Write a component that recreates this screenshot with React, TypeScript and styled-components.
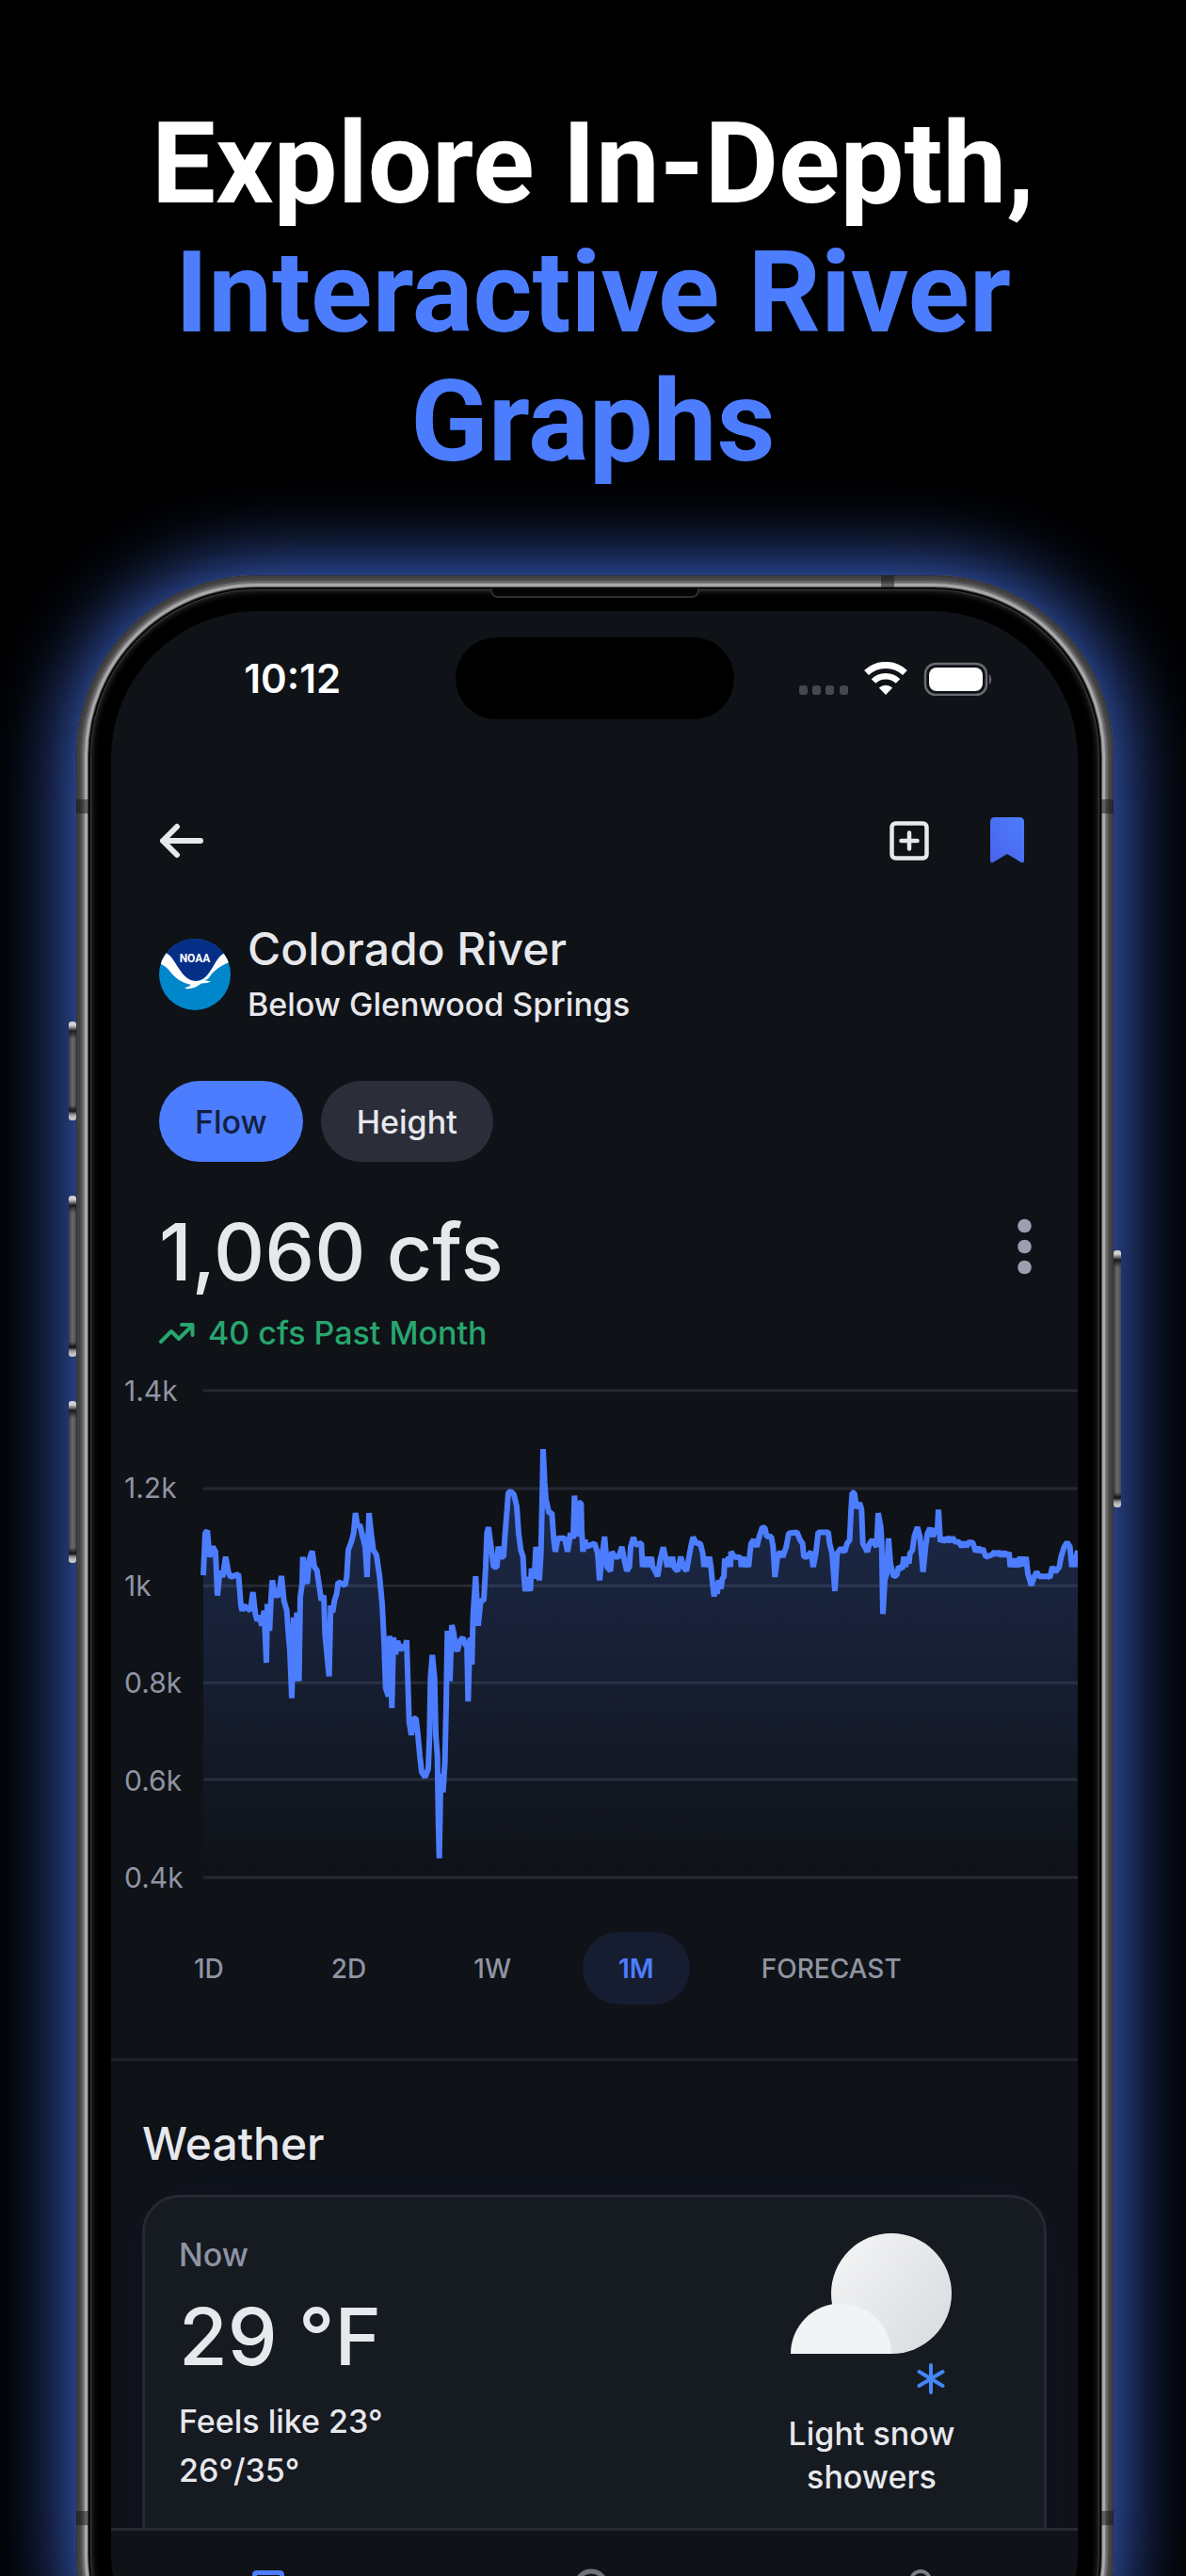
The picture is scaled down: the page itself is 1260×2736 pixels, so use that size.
import React from "react";
import styled, { createGlobalStyle, css } from "styled-components";

const GlobalStyle = createGlobalStyle`
  *, *::before, *::after { box-sizing: border-box; }
  body { margin: 0; background: #000; }
  button { font: inherit; border: 0; padding: 0; background: none; cursor: pointer; }
  svg { display: block; }
`;

const color = {
  screen: "#0f1217",
  card: "#161a21",
  line: "#262932",
  text: "#e7e8ec",
  muted: "#8f94a3",
  blue: "#4c7dff",
  green: "#27a66f",
};

const Page = styled.main`
  height: 100vh;
  overflow: hidden;
  background: #000;
  color: ${color.text};
  font-family: Inter, "Liberation Sans", sans-serif;
  font-weight: 500;
`;

const Headline = styled.h1`
  margin: 0;
  padding: 106px 60px 94px;
  font: 700 121px/137px Roboto, "Liberation Sans", sans-serif;
  color: #fff;
  text-align: center;
`;

const Accent = styled.span`
  display: block;
  color: ${color.blue};
`;

const Phone = styled.div`
  position: relative;
  margin: 0 77px 0 81px;
  aspect-ratio: 1102 / 2294;
  padding: 38px 38px 38px 37px;
  border-radius: 192px;
  background: #000;
  box-shadow:
    0 0 92px ${color.blue},
    inset 0 0 0 1px #333335,
    inset 0 0 0 4px #424244,
    inset 0 0 0 6px #4e4e50,
    inset 0 0 0 8px #6a6a6b,
    inset 0 0 0 9px #858586,
    inset 0 0 0 12px #a8a8a8,
    inset 0 0 0 13px #4c4c4c,
    inset 0 0 0 15px #070707,
    inset 0 0 0 16px #3a3a3a,
    inset 0 0 6px 17px #303030;
`;

const SideKey = styled.span<{ $side: "left" | "right"; $top: number; $length: number }>`
  position: absolute;
  ${(p) => p.$side}: -8px;
  top: ${(p) => p.$top}px;
  width: 8px;
  height: ${(p) => p.$length}px;
  border-radius: 3px;
  background:
    linear-gradient(#d0d0d0 0 4px, #777 7px, #1a1a1a 10px, transparent 18px calc(100% - 16px), #111 calc(100% - 10px), #999 calc(100% - 6px), #c4c4c4 calc(100% - 3px)),
    linear-gradient(90deg, #3c3c3e, #6b6b6d, #4a4a4c);
`;

const Band = styled.span<{ $edge: "left" | "right" | "top"; $at: number }>`
  position: absolute;
  background: rgba(20, 20, 20, 0.5);
  ${(p) =>
    p.$edge === "top"
      ? css`top: 0; left: ${p.$at}px; width: 14px; height: 13px;`
      : css`${p.$edge}: 0; top: ${p.$at}px; width: 13px; height: 15px;`}
`;

const Earpiece = styled.span`
  position: absolute;
  top: 14px;
  left: 50%;
  width: 222px;
  height: 10px;
  margin-left: -111px;
  border: 2px solid #2e2e2e;
  border-top: 0;
  border-radius: 0 0 8px 8px;
  background: #050505;
`;

const Screen = styled.div`
  display: flex;
  flex-direction: column;
  height: 100%;
  overflow: hidden;
  border-radius: 156px;
  background: ${color.screen};
`;

const Content = styled.div`
  flex: 1;
  min-height: 0;
  overflow: hidden;
`;

const StatusBar = styled.div`
  display: grid;
  grid-template-columns: 1fr 296px 1fr;
  align-items: center;
  padding-top: 28px;
`;

const Clock = styled.time`
  padding-left: 20px;
  color: #fff;
  font-size: 42px;
  font-weight: 600;
  line-height: 46px;
  text-align: center;
`;

const Island = styled.div`
  height: 87px;
  border-radius: 44px;
  background: #000;
`;

const StatusIcons = styled.div`
  display: flex;
  justify-content: center;
  padding-right: 20px;
`;

const NavBar = styled.nav`
  display: flex;
  align-items: center;
  gap: 65px;
  padding: 104px 57px 0 51px;
`;

const IconButton = styled.button<{ $push?: boolean }>`
  display: flex;
  align-items: center;
  height: 49px;
  margin-left: ${(p) => (p.$push ? "auto" : "0")};
`;

const Station = styled.header`
  display: flex;
  align-items: center;
  gap: 18px;
  padding: 63px 51px 0;
`;

const Title = styled.h2`
  margin: 0;
  font-size: 48px;
  font-weight: 500;
  line-height: 56px;
`;

const Body = styled.p<{ $muted?: boolean; $leading?: number }>`
  margin: 0;
  font-size: 34px;
  line-height: ${(p) => p.$leading ?? 46}px;
  color: ${(p) => (p.$muted ? color.muted : color.text)};
`;

const StationText = styled.div`
  display: grid;
  gap: 8px;
`;

const Pills = styled.div`
  display: flex;
  gap: 19px;
  padding: 58px 51px 0;
`;

const Pill = styled.button<{ $active?: boolean }>`
  height: 86px;
  padding: 0 38px;
  border-radius: 43px;
  font-size: 34px;
  background: ${(p) => (p.$active ? color.blue : "#2b2e39")};
  color: ${(p) => (p.$active ? "#13203f" : color.text)};
`;

const Reading = styled.div`
  display: flex;
  justify-content: space-between;
  padding: 46px 49px 0 51px;
`;

const Figure = styled.p`
  margin: 0;
  font-size: 84px;
  line-height: 100px;
`;

const MoreButton = styled.button`
  align-self: flex-start;
  padding: 14px 0;
`;

const Trend = styled.p`
  display: flex;
  align-items: center;
  gap: 14px;
  margin: 0;
  padding: 13px 51px 0;
  font-size: 34px;
  line-height: 46px;
  color: ${color.green};
`;

const Chart = styled.figure`
  display: grid;
  grid-template-columns: 98px 1fr;
  margin: 15px 0 0;
`;

const AxisLabels = styled.div`
  display: flex;
  flex-direction: column;
  justify-content: space-between;
  padding-left: 14px;
  font-size: 30px;
  font-weight: 400;
  line-height: 46px;
  color: ${color.muted};
`;

const Plot = styled.svg`
  width: 100%;
  height: 517px;
  margin: 23px 0;
  overflow: visible;
`;

const Ranges = styled.div`
  display: flex;
  gap: 38px;
  padding: 35px 50px 57px;
  border-bottom: 3px solid #1e2129;
`;

const Range = styled.button<{ $active?: boolean }>`
  height: 77px;
  padding: 0 38px;
  border-radius: 38px;
  font-size: 28px;
  font-weight: ${(p) => (p.$active ? 600 : 500)};
  background: ${(p) => (p.$active ? "#161d30" : "transparent")};
  color: ${(p) => (p.$active ? color.blue : color.muted)};
`;

const Weather = styled.section`
  padding: 60px 33px 0;
`;

const Card = styled.div`
  display: flex;
  justify-content: space-between;
  height: 480px;
  margin-top: 26px;
  padding: 38px 38px 38px 36px;
  border: 3px solid ${color.line};
  border-radius: 40px;
  background: ${color.card};
  box-shadow: 0 0 60px rgba(20, 30, 70, 0.3);
`;

const Now = styled.div`
  display: grid;
  align-content: start;
  row-gap: 14px;
`;

const Sky = styled.div`
  display: flex;
  flex-direction: column;
  align-items: center;
  gap: 18px;
  width: 290px;
  text-align: center;
`;

const SkyText = styled(Body)`
  max-width: 220px;
`;

const TabBar = styled.nav`
  display: flex;
  justify-content: space-between;
  height: 182px;
  padding: 40px 144px 0;
  border-top: 3px solid ${color.line};
  background: ${color.screen};
`;

const Tab = styled.a`
  height: 46px;
`;

/* Flow over the past month, as x,y pairs in plot units. */
const FLOW: number[] = [
  78,625, 84,500, 91,492, 98,570, 108,540, 117,555, 123,685, 131,612, 140,630, 149,570, 158,615, 165,630, 190,622,
  198,715, 202,730, 208,715, 228,730, 236,675, 244,740, 250,760, 258,745, 264,775, 272,730, 279,885, 282,710,
  289,790, 294,690, 298,640, 306,685, 318,685, 327,627, 335,700, 344,730, 350,810, 354,850, 360,990, 366,750,
  371,940, 376,735, 383,940, 387,690, 393,650, 395,570, 402,630, 409,650, 415,580, 425,553, 432,600, 440,610,
  448,660, 454,700, 462,685, 466,800, 472,860, 479,925, 484,715, 490,735, 496,700, 503,680, 508,645, 530,655,
  535,630, 540,550, 550,525, 557,500, 563,440, 570,480, 577,475, 586,510, 594,540, 600,630, 606,440, 613,500,
  620,550, 630,565, 640,630, 648,710, 654,820, 657,900, 659,960, 668,985, 672,805, 679,1020, 684,810, 691,860,
  697,820, 705,848, 716,832, 720,848, 726,818, 730,940, 734,1060, 741,1100, 748,1050, 756,1052, 762,1100,
  768,1160, 774,1210, 785,1225, 795,1200, 799,1100, 802,930, 808,862, 815,930, 819,1100, 824,1160, 827,1350,
  830,1466, 835,1215, 842,1270, 848,1180, 852,1010, 856,790, 864,940, 870,773, 876,795, 882,840, 888,850,
  896,820, 905,810, 914,835, 918,820, 922,1000, 928,810, 934,890, 938,740, 946,628, 954,775, 962,700, 972,700,
  978,600, 982,500, 987,482, 995,540, 1003,600, 1014,600, 1018,540, 1027,570, 1035,570, 1040,500, 1046,430,
  1050,380, 1057,375, 1068,385, 1077,420, 1083,500, 1090,550, 1097,570, 1100,630, 1104,672, 1111,630, 1120,672,
  1124,605, 1133,635, 1138,540, 1149,640, 1154,560, 1158,400, 1161,250, 1166,350, 1170,400, 1180,440, 1189,440,
  1195,520, 1200,555, 1208,515, 1230,515, 1239,555, 1248,500, 1257,515, 1261,388, 1268,510, 1275,410, 1282,410,
  1284,490, 1288,555, 1294,520, 1300,540, 1325,530, 1335,560, 1341,640, 1350,560, 1357,510, 1365,600, 1376,612,
  1380,555, 1390,570, 1402,570, 1412,540, 1420,580, 1428,612, 1436,600, 1440,540, 1449,512, 1456,535, 1470,530,
  1474,530, 1478,600, 1482,570, 1490,600, 1494,570, 1500,600, 1506,570, 1510,600, 1514,605, 1526,628, 1534,580,
  1544,542, 1552,575, 1557,600, 1562,570, 1568,600, 1573,570, 1578,600, 1582,605, 1590,612, 1600,570, 1608,600,
  1618,612, 1626,570, 1632,540, 1639,512, 1650,530, 1662,530, 1670,560, 1674,600, 1680,570, 1686,600, 1691,570,
  1696,600, 1700,640, 1706,688, 1712,650, 1716,680, 1720,640, 1728,665, 1732,635, 1737,630, 1740,575, 1746,600,
  1752,570, 1758,600, 1760,555, 1770,570, 1790,572, 1793,600, 1799,570, 1804,600, 1810,575, 1816,600, 1820,560,
  1824,530, 1832,520, 1842,540, 1850,510, 1860,482, 1868,485, 1874,510, 1888,510, 1894,540, 1900,630, 1908,570,
  1916,555, 1925,570, 1936,540, 1944,500, 1970,497, 1980,520, 1988,530, 1992,570, 2002,570, 2015,555, 2022,600,
  2030,560, 2038,497, 2070,497, 2074,530, 2082,560, 2091,672, 2098,560, 2110,545, 2122,555, 2130,530, 2138,520,
  2142,440, 2146,380, 2153,380, 2160,425, 2170,410, 2176,430, 2180,530, 2186,540, 2194,555, 2202,530, 2210,520,
  2224,540, 2229,440, 2237,480, 2240,520, 2244,740, 2250,640, 2256,620, 2262,515, 2268,590, 2278,628, 2288,625,
  2294,600, 2306,605, 2311,570, 2316,600, 2321,570, 2327,590, 2330,560, 2338,550, 2344,510, 2354,482, 2362,510,
  2372,615, 2380,540, 2386,500, 2394,485, 2404,510, 2410,485, 2417,500, 2421,430, 2427,525, 2435,515, 2445,525,
  2450,512, 2460,525, 2466,512, 2472,525, 2485,525, 2495,540, 2504,527, 2510,540, 2516,527, 2530,527, 2540,555,
  2548,542, 2556,555, 2562,545, 2572,570, 2590,565, 2600,555, 2606,565, 2614,555, 2622,567, 2632,557, 2640,567,
  2646,557, 2650,600, 2658,575, 2664,600, 2670,575, 2676,600, 2681,570, 2686,598, 2691,570, 2696,595, 2700,570,
  2706,620, 2717,655, 2726,630, 2734,615, 2742,628, 2770,628, 2776,632, 2784,600, 2794,615, 2806,600, 2812,570,
  2822,540, 2831,527, 2840,540, 2846,600, 2851,570, 2856,600, 2860,570, 2865,552,
];

const GRID = [76, 367, 656, 944, 1232, 1523];

function FlowChart() {
  const points: string[] = [];
  for (let i = 0; i < FLOW.length; i += 2) points.push(`${FLOW[i]},${FLOW[i + 1]}`);
  const line = points.join(" ");
  return (
    <Chart aria-label="Flow over the past month">
      <AxisLabels>
        {["1.4k", "1.2k", "1k", "0.8k", "0.6k", "0.4k"].map((label) => (
          <span key={label}>{label}</span>
        ))}
      </AxisLabels>
      <Plot viewBox="78 76 2787 1447" preserveAspectRatio="none" aria-hidden="true">
        <defs>
          <linearGradient id="flowFill" gradientUnits="userSpaceOnUse" x1="0" y1="250" x2="0" y2="1523">
            <stop offset="0" stopColor={color.blue} stopOpacity="0.24" />
            <stop offset="1" stopColor={color.blue} stopOpacity="0" />
          </linearGradient>
        </defs>
        {GRID.map((y) => (
          <line key={y} x1="78" x2="2865" y1={y} y2={y} stroke={color.line} strokeWidth="3" vectorEffect="non-scaling-stroke" />
        ))}
        <polygon points={`78,1523 ${line} 2865,1523`} fill="url(#flowFill)" />
        <polyline points={line} fill="none" stroke={color.blue} strokeWidth="6" strokeLinejoin="bevel" vectorEffect="non-scaling-stroke" />
      </Plot>
    </Chart>
  );
}

function StatusGlyphs() {
  return (
    <svg width="206" height="36" viewBox="0 0 206 36" role="img" aria-label="No signal, Wi-Fi, battery full">
      {[0, 14, 28, 43].map((x) => (
        <rect key={x} x={x} y="25" width="9" height="10" rx="3" fill="#45484d" />
      ))}
      <g fill="none" stroke="#fff">
        <path d="M71.500 11.500A30 30 0 0 1 112.500 11.500" strokeWidth="7" />
        <path d="M79 20.500A18.500 18.500 0 0 1 105 20.500" strokeWidth="6.500" />
      </g>
      <path d="M92 35L84.800 27.600A10.500 10.500 0 0 1 99.200 27.600Z" fill="#fff" />
      <rect x="134" y="2" width="65" height="33" rx="11" fill="none" stroke="#696b6f" strokeWidth="2.500" />
      <rect x="138" y="6" width="57" height="25" rx="8" fill="#fff" />
      <path d="M202 13a6 7 0 0 1 0 11z" fill="#696b6f" />
    </svg>
  );
}

function NoaaLogo() {
  return (
    <svg width="76" height="76" viewBox="0 0 76 76" role="img" aria-label="NOAA">
      <clipPath id="noaaDisc"><circle cx="38" cy="38" r="38" /></clipPath>
      <g clipPath="url(#noaaDisc)">
        <rect width="76" height="76" fill="#0086cb" />
        <path d="M0 0H76V16C70 14 66 17 61 24C55 33 49 45 38 45C27 45 21 33 15 24C11 17 6 14 0 16Z" fill="#052f87" />
        <path d="M7 15C14 18 16 25 22 33C27 41 33 45 39 45C47 45 51 40 56 32C62 22 64 17 71 15L75 25C66 28 58 34 54 40C52 43 50 44 48 44L55 45.500C52 47.500 48 47 45 47.500C41 50 37 54 27 53C29 51 32 51 34 49C24 47 16 41 11 34C7 29 4 28 0 26Z" fill="#fff" />
      </g>
      <text x="38" y="25" textAnchor="middle" fontFamily="Roboto, sans-serif" fontWeight="700" fontSize="12" fill="#fff">NOAA</text>
    </svg>
  );
}

function SnowCloud() {
  return (
    <svg width="172" height="172" viewBox="0 0 172 172" role="img" aria-label="Light snow showers">
      <defs>
        <linearGradient id="cloudFill" x1="0" y1="0.1" x2="1" y2="0.9">
          <stop offset="0" stopColor="#f3f4f5" />
          <stop offset="1" stopColor="#d9dbdf" />
        </linearGradient>
      </defs>
      <circle cx="107" cy="64" r="64" fill="url(#cloudFill)" />
      <path d="M0 128A53.500 53.500 0 0 1 107 128Z" fill="#f1f3f5" />
      <g stroke="#4386f5" strokeWidth="4" strokeLinecap="round">
        <path d="M149 140V169M136.500 147L161.500 162M161.500 147L136.500 162" />
      </g>
    </svg>
  );
}

export default function App() {
  return (
    <Page>
      <GlobalStyle />
      <Headline>
        Explore In-Depth, <Accent>Interactive River Graphs</Accent>
      </Headline>
      <Phone>
        <SideKey $side="left" $top={474} $length={105} />
        <SideKey $side="left" $top={659} $length={171} />
        <SideKey $side="left" $top={877} $length={172} />
        <SideKey $side="right" $top={717} $length={273} />
        <Band $edge="left" $at={238} />
        <Band $edge="right" $at={238} />
        <Band $edge="left" $at={2056} />
        <Band $edge="right" $at={2056} />
        <Band $edge="top" $at={855} />
        <Earpiece />
        <Screen>
          <Content>
            <StatusBar>
              <Clock>10:12</Clock>
              <Island />
              <StatusIcons><StatusGlyphs /></StatusIcons>
            </StatusBar>

            <NavBar>
              <IconButton aria-label="Back">
                <svg width="47" height="38" viewBox="0 0 47 38" fill="none" stroke={color.text} strokeWidth="6" strokeLinecap="round" strokeLinejoin="round">
                  <path d="M44 19H4M19 4L4 19L19 34" />
                </svg>
              </IconButton>
              <IconButton $push aria-label="Add to list">
                <svg width="42" height="42" viewBox="0 0 42 42" fill="none" stroke={color.text} strokeWidth="4.500" strokeLinecap="round">
                  <rect x="2.500" y="2.500" width="37" height="37" rx="4" />
                  <path d="M21 12.500V29.500M12.500 21H29.500" />
                </svg>
              </IconButton>
              <IconButton aria-label="Bookmarked">
                <svg width="36" height="49" viewBox="0 0 36 49">
                  <defs>
                    <linearGradient id="markFill" x1="1" y1="0" x2="0" y2="1">
                      <stop offset="0" stopColor="#4c7dff" />
                      <stop offset="1" stopColor="#4a63ea" />
                    </linearGradient>
                  </defs>
                  <path d="M5 0H31Q36 0 36 5V46Q36 49 33 48L18 39L3 48Q0 49 0 46V5Q0 0 5 0Z" fill="url(#markFill)" />
                </svg>
              </IconButton>
            </NavBar>

            <Station>
              <NoaaLogo />
              <StationText>
                <Title>Colorado River</Title>
                <Body>Below Glenwood Springs</Body>
              </StationText>
            </Station>

            <Pills>
              <Pill $active>Flow</Pill>
              <Pill>Height</Pill>
            </Pills>

            <Reading>
              <Figure>1,060 cfs</Figure>
              <MoreButton aria-label="More options">
                <svg width="15" height="60" viewBox="0 0 15 60" fill="#9aa0b0">
                  <circle cx="7.500" cy="8" r="7.300" />
                  <circle cx="7.500" cy="30" r="7.300" />
                  <circle cx="7.500" cy="52" r="7.300" />
                </svg>
              </MoreButton>
            </Reading>
            <Trend>
              <svg width="38" height="24" viewBox="0 0 38 24" fill="none" stroke={color.green} strokeWidth="4" strokeLinejoin="round" strokeLinecap="round">
                <path d="M2 21L13 10L21 18L35 4M24 3H35.500V14" />
              </svg>
              40 cfs Past Month
            </Trend>

            <FlowChart />

            <Ranges>
              <Range>1D</Range>
              <Range>2D</Range>
              <Range>1W</Range>
              <Range $active>1M</Range>
              <Range>FORECAST</Range>
            </Ranges>

            <Weather>
              <Title>Weather</Title>
              <Card>
                <Now>
                  <Body $muted>Now</Body>
                  <Figure>29 °F</Figure>
                  <Body $leading={52}>Feels like 23°<br />26°/35°</Body>
                </Now>
                <Sky>
                  <SnowCloud />
                  <SkyText>Light snow showers</SkyText>
                </Sky>
              </Card>
            </Weather>
          </Content>

          <TabBar>
            <Tab href="#saved" aria-label="Saved">
              <svg width="46" height="46" viewBox="0 0 46 46" fill="none" stroke={color.blue} strokeWidth="5">
                <path d="M8.500 44V7Q8.500 4.500 11 4.500H35Q37.500 4.500 37.500 7V44L23 35Z" />
              </svg>
            </Tab>
            <Tab href="#search" aria-label="Search">
              <svg width="46" height="46" viewBox="0 0 46 46" fill="none" stroke="#6f7279" strokeWidth="5" strokeLinecap="round">
                <circle cx="19" cy="19" r="16" />
                <path d="M31 31L43 43" />
              </svg>
            </Tab>
            <Tab href="#profile" aria-label="Profile">
              <svg width="46" height="46" viewBox="0 0 46 46" fill="none" stroke="#7b7e85" strokeWidth="4">
                <circle cx="23" cy="13" r="10" />
                <path d="M5 44Q5 29 23 29T41 44" />
              </svg>
            </Tab>
          </TabBar>
        </Screen>
      </Phone>
    </Page>
  );
}
